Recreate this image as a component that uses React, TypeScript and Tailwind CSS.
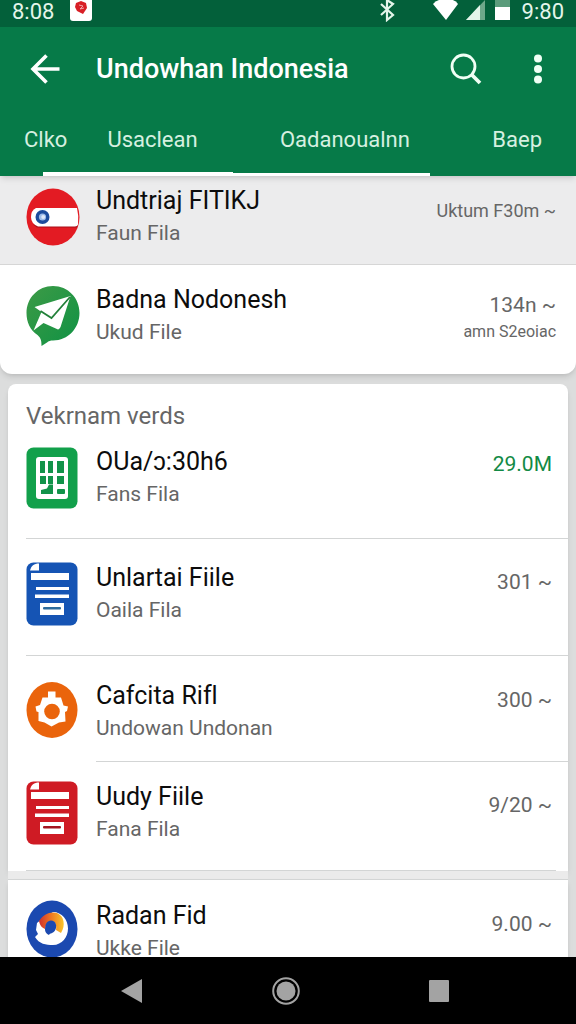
import React from 'react';
import clsx from 'clsx';

type FileItem = {
  title: string;
  subtitle: string;
  meta: string;
  note?: string;
  icon: React.ReactNode;
  rowClass: string;
  metaClass?: string;
};

function PillIcon() {
  return (
    <svg width="54" height="58" viewBox="0 0 54 58" aria-hidden="true">
      <ellipse cx="27" cy="29" rx="26.500" ry="28.500" fill="#e31b23" />
      <path d="M11 39.500h40l1-3H7z" fill="#a90f18" />
      <path d="M10 20h41q2 8 1 16.500q-.5 2-3 2H12q-7-3-7-9.500t5-9z" fill="#fff" />
      <circle cx="16.500" cy="29" r="7" fill="#1c4b9c" />
      <circle cx="16.500" cy="29" r="3.600" fill="#9dbbe8" />
      <circle cx="17.200" cy="29" r="2" fill="#dfe9f8" />
    </svg>
  );
}

function SendIcon() {
  return (
    <svg width="54" height="62" viewBox="0 0 54 62" aria-hidden="true">
      <defs>
        <linearGradient id="send" x1="0" y1="0" x2="1" y2="1">
          <stop offset="0" stopColor="#3d9a46" />
          <stop offset="1" stopColor="#0f9244" />
        </linearGradient>
      </defs>
      <path d="M27 1c15 0 26.500 12 26.500 27S42 55.500 27 55.500c-2.500 0-4.500.5-6 2L15.500 61c0-5-.5-8-4-11C4 45 .5 37 .5 28 .5 13 12 1 27 1z" fill="url(#send)" />
      <path d="M44.500 11 8.500 22l7 5-8 18.500 10-7.500 14.500 6.500c1.500-.5 2.500-2 3-4z" fill="#fff" />
      <path d="M14.500 26 25.500 33 44 12" fill="none" stroke="#23803a" strokeWidth="1.800" />
    </svg>
  );
}

function SheetIcon() {
  return (
    <svg width="52" height="62" viewBox="0 0 52 62" aria-hidden="true">
      <rect x=".5" y=".5" width="51" height="61" rx="7" fill="#12a04b" />
      <rect x="10" y="10" width="32" height="42" rx="3" fill="#fff" />
      <g fill="#12934a">
        <rect x="14" y="14" width="5" height="12" />
        <rect x="22" y="14" width="5" height="12" />
        <rect x="31" y="14" width="7" height="12" />
        <rect x="14" y="29" width="6" height="8" />
        <rect x="22" y="29" width="5" height="8" />
        <rect x="31" y="29" width="7" height="8" />
        <path d="M15 43l6-1.500 2-4h4V47H15z" />
        <rect x="31" y="42" width="8" height="5" rx="1" />
      </g>
    </svg>
  );
}

function DocIcon({ color, line }: { color: string; line: string }) {
  return (
    <svg width="52" height="64" viewBox="0 0 52 64" aria-hidden="true">
      <rect x=".5" y=".5" width="51" height="63" rx="7" fill={color} />
      <path d="M4 8.500C5 4 8 1.500 13 1.500v7z" fill="#fff" />
      <g fill="#fff">
        <rect x="5" y="11" width="38" height="7" />
        <rect x="10" y="25" width="33" height="3" />
        <rect x="9" y="32.500" width="34" height="3.500" />
        <rect x="14" y="41" width="24" height="12" />
      </g>
      <rect x="17" y="45" width="18" height="2.500" rx="1" fill={line} />
    </svg>
  );
}

function GearIcon() {
  return (
    <svg width="52" height="62" viewBox="0 0 52 62" aria-hidden="true">
      <ellipse cx="26" cy="29" rx="25.500" ry="28" fill="#ea640c" />
      <path
        d="M22 10.500h7.500v6H35l2.500 8 4.500 1-1 4.500-2 1 .5 9.500-6.500 1-7.500 4-7-4-6-1.500v-9l-2-.5-1-5 4.500-1.500 2.500-7.500h5.500z"
        fill="#fff"
      />
      <circle cx="26" cy="30.500" r="7.800" fill="#ea640c" />
    </svg>
  );
}

function SwirlIcon() {
  return (
    <svg width="52" height="64" viewBox="0 0 52 64" aria-hidden="true">
      <defs>
        <linearGradient id="swirl" x1="0" y1="0" x2="1" y2="0">
          <stop offset="0" stopColor="#cf2f2c" />
          <stop offset=".5" stopColor="#ef7a22" />
          <stop offset="1" stopColor="#f9c62b" />
        </linearGradient>
      </defs>
      <ellipse cx="26" cy="29" rx="25.500" ry="28.500" fill="#1b49b0" />
      <path d="M27 12c9 0 15 8 15 16.500S36 45 27 45c-7 0-14-1-18-8l3-3-2-4 1-7 5-4z" fill="#fff" />
      <path d="M13 21c4-7 12-10 18-8 7 3 9 12 4 20l-5-3c1-5-1-9-5-9-3 0-5 3-6 8-4-2-5-4-6-8z" fill="url(#swirl)" />
      <path d="M19 30c0-6 2-9.500 6-9.500 5 0 6.500 6 4 10-2 3.500-5 2-6 4.500-2-1-3.500-2-4-5z" fill="#1b49b0" />
    </svg>
  );
}

const recent: FileItem[] = [
  {
    title: 'Undtriaj FITIKJ',
    subtitle: 'Faun Fila',
    meta: 'Uktum F30m ~',
    icon: <PillIcon />,
    rowClass: 'pt-[9px] pb-[15px] bg-[#ececed] border-b border-[#d6d6d6]',
    metaClass: 'text-lg leading-[52px]',
  },
  {
    title: 'Badna Nodonesh',
    subtitle: 'Ukud File',
    meta: '134n ~',
    note: 'amn S2eoiac',
    icon: <SendIcon />,
    rowClass: 'pt-[19px] pb-[26px]',
    metaClass: 'text-[21px] leading-[42px]',
  },
];

const files: FileItem[] = [
  {
    title: 'OUa/ɔ:30h6',
    subtitle: 'Fans Fila',
    meta: '29.0M',
    icon: <SheetIcon />,
    rowClass: 'pt-[14px] pb-7',
    metaClass: 'text-[21px] leading-9 text-[#128a45]',
  },
  {
    title: 'Unlartai Fiile',
    subtitle: 'Oaila Fila',
    meta: '301 ~',
    icon: <DocIcon color="#1554b4" line="#2c6b9c" />,
    rowClass: 'pt-[23px] pb-[29px]',
  },
  {
    title: 'Cafcita Rifl',
    subtitle: 'Undowan Undonan',
    meta: '300 ~',
    icon: <GearIcon />,
    rowClass: 'pt-6 pb-[17px]',
  },
  {
    title: 'Uudy Fiile',
    subtitle: 'Fana Fila',
    meta: '9/20 ~',
    icon: <DocIcon color="#cf1b24" line="#a3151f" />,
    rowClass: 'pt-[19px] pb-[25px]',
    metaClass: 'text-[21px] leading-[48px]',
  },
];

const older: FileItem = {
  title: 'Radan Fid',
  subtitle: 'Ukke File',
  meta: '9.00 ~',
  icon: <SwirlIcon />,
  rowClass: 'pt-5 pb-6',
  metaClass: 'text-[21px] leading-[48px]',
};

function FileRow({ item }: { item: FileItem }) {
  return (
    <div className={clsx('flex items-start', item.rowClass)}>
      <div className="flex h-16 w-[70px] shrink-0 items-center">{item.icon}</div>
      <div className="min-w-0 flex-1">
        <h3 className="text-[25px] leading-8 text-[#0c0c0c] [font-variant-ligatures:none]">{item.title}</h3>
        <p className="text-[21px] leading-8 text-[#666]">{item.subtitle}</p>
      </div>
      <div className="flex shrink-0 flex-col items-end text-[#666]">
        <span className={item.metaClass ?? 'text-[21px] leading-10'}>{item.meta}</span>
        {item.note && <span className="text-base leading-3">{item.note}</span>}
      </div>
    </div>
  );
}

function StatusBar() {
  return (
    <div className="flex h-[27px] items-start justify-between bg-[#03603a] px-3 text-[22px] leading-6 text-[#e4f5ea]">
      <div className="flex items-start gap-4">
        <span>8:08</span>
        <svg width="22" height="21" viewBox="0 0 22 21" aria-hidden="true">
          <path d="M0 0h22v18q0 3-3 3H3q-3 0-3-3z" fill="#fff" />
          <path d="M6 3l5-2 5 2 1 5-4 6-6-3-2-4z" fill="#d81f26" />
          <path d="M9 5l4 1-3 3 4-1" fill="none" stroke="#f3a3a6" />
        </svg>
      </div>
      <div className="flex items-start">
        <svg width="132" height="22" viewBox="0 0 132 22" aria-hidden="true">
          <path d="M3 4l12 11-6 5V0l6 4L3 15" fill="none" stroke="#e4f5ea" strokeWidth="2.200" />
          <path d="M55 4Q59-1 68-1t12 5L68 20z" fill="#fff" />
          <path d="M107 0v20H88z" fill="#6da88a" />
          <path d="M102 5v15H88z" fill="#e4f5ea" />
          <path d="M117 0h15v7h-15z" fill="#5c9c7c" />
          <path d="M117 7h15v13h-15z" fill="#fff" />
        </svg>
        <span className="pl-3">9:80</span>
      </div>
    </div>
  );
}

export default function App() {
  return (
    <div className="flex h-screen flex-col overflow-hidden bg-[#dcdddd] font-['Roboto',sans-serif]">
      <header className="relative z-10 shrink-0 bg-[#067a48] text-white shadow-md">
        <StatusBar />
        <div className="flex h-[84px] items-center pr-6 pl-[30px]">
          <button type="button" aria-label="Back" className="w-[66px]">
            <svg width="30" height="30" viewBox="0 0 30 30" fill="none" stroke="#fff" strokeWidth="3.600" aria-hidden="true">
              <path d="M29.500 15H3M16.500 1.500L3 15l13.500 13.500" />
            </svg>
          </button>
          <h1 className="flex-1 text-[27px] leading-8 font-medium">Undowhan Indonesia</h1>
          <button type="button" aria-label="Search">
            <svg width="32" height="32" viewBox="0 0 32 32" fill="none" stroke="#f0fff5" aria-hidden="true">
              <circle cx="13.500" cy="13.500" r="11.500" strokeWidth="2.800" />
              <path d="M21.500 21.500L30 30" strokeWidth="3.800" />
            </svg>
          </button>
          <button type="button" aria-label="More options" className="ml-[42px] flex w-7 justify-center">
            <svg width="10" height="30" viewBox="0 0 10 30" fill="#f0fff5" aria-hidden="true">
              <circle cx="5" cy="4.500" r="4" />
              <circle cx="5" cy="15" r="4" />
              <circle cx="5" cy="25.500" r="4" />
            </svg>
          </button>
        </div>
        <nav className="flex h-[61px] items-center pr-[34px] pb-1 pl-6 text-[22px] text-[#d6f0e0]">
          <button type="button">Clko</button>
          <button type="button" className="ml-10">Usaclean</button>
          <button type="button" className="flex-1 text-center">Oadanoualnn</button>
          <button type="button">Baep</button>
        </nav>
        <div className="flex h-1 items-end pl-[43px]">
          <div className="h-1 w-[190px] bg-white" />
          <div className="h-[3px] w-[197px] bg-white" />
        </div>
      </header>

      <main className="min-h-0 flex-1 overflow-hidden">
        <section className="overflow-hidden rounded-b-xl bg-white shadow-md *:pr-5 *:pl-[26px]">
          {recent.map((item) => (
            <FileRow key={item.title} item={item} />
          ))}
        </section>

        <section className="mx-2 mt-[10px] rounded-t-lg bg-white pl-[18px] shadow-md">
          <h2 className="pt-4 text-2xl leading-8 text-[#666]">Vekrnam verds</h2>
          {files.map((item, i) => (
            <div key={item.title}>
              <div className="pr-4">
                <FileRow item={item} />
              </div>
              <hr className={clsx('border-[#d3d5d5]', i === 2 && 'ml-[70px]', i === 3 && 'mr-3')} />
            </div>
          ))}
        </section>

        <div className="mx-2 h-2 bg-[#ebebeb]" />

        <section className="mx-2 border-t border-[#d3d5d5] bg-white pr-4 pl-[18px] shadow-md">
          <FileRow item={older} />
        </section>
      </main>

      <footer className="flex h-[67px] shrink-0 items-center justify-between bg-black pr-[22%] pl-[21%]">
        <button type="button" aria-label="Back">
          <svg width="21" height="26" viewBox="0 0 21 26" fill="#a3a3a3" aria-hidden="true">
            <path d="M21 1v24L0 13z" />
          </svg>
        </button>
        <button type="button" aria-label="Home">
          <svg width="28" height="28" viewBox="0 0 28 28" aria-hidden="true">
            <circle cx="14" cy="14" r="12.800" fill="none" stroke="#a3a3a3" strokeWidth="2" />
            <circle cx="14" cy="14" r="9.500" fill="#a3a3a3" />
          </svg>
        </button>
        <button type="button" aria-label="Recent apps">
          <svg width="20" height="22" viewBox="0 0 20 22" fill="#a3a3a3" aria-hidden="true">
            <rect width="20" height="22" rx="1" />
          </svg>
        </button>
      </footer>
    </div>
  );
}
